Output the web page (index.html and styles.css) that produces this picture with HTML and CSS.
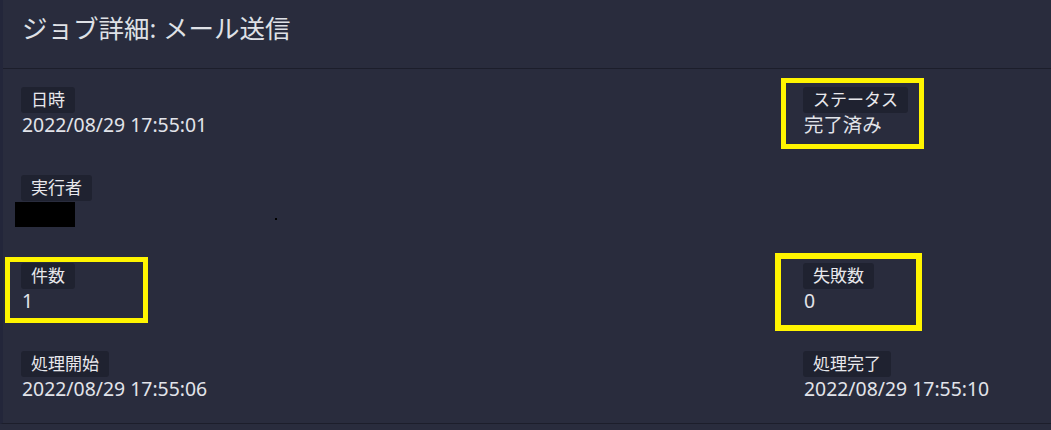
FILE: index.html
```html
<!DOCTYPE html>
<html lang="ja">
<head>
    <meta charset="UTF-8">
    <meta name="viewport" content="width=device-width, initial-scale=1.0">
    <title>ジョブ詳細</title>
    <link rel="stylesheet" href="styles.css">
</head>
<body>
    <div class="card">
        <div class="card-header">
            <h1>ジョブ詳細: メール送信</h1>
        </div>
        <div class="card-body">
            <div class="field">
                <span class="label">日時</span>
                <div class="value">2022/08/29 17:55:01</div>
            </div>
            <div class="field">
                <span class="label">ステータス</span>
                <div class="value">完了済み</div>
                <span class="mark mark-status"></span>
            </div>
            <div class="field">
                <span class="label">実行者</span>
                <div class="redact"></div>
                <span class="dot"></span>
            </div>
            <div class="field"></div>
            <div class="field">
                <span class="label">件数</span>
                <div class="value">1</div>
                <span class="mark mark-count"></span>
            </div>
            <div class="field">
                <span class="label">失敗数</span>
                <div class="value">0</div>
                <span class="mark mark-failed"></span>
            </div>
            <div class="field">
                <span class="label">処理開始</span>
                <div class="value">2022/08/29 17:55:06</div>
            </div>
            <div class="field">
                <span class="label">処理完了</span>
                <div class="value">2022/08/29 17:55:10</div>
            </div>
        </div>
    </div>
</body>
</html>
```

FILE: styles.css
```css
body {
    margin: 0;
    background-color: #292c3d;
    color: #e2e4ea;
    font-family: "Noto Sans", "Noto Sans CJK JP", sans-serif;
}
.card {
    border-left: 3px solid #23263a;
    border-bottom: 1px solid #1c1e2b;
}
.card-header {
    padding: 12px 19px 24px;
    border-bottom: 1px solid #1c1e2b;
}
.card-header h1 {
    margin: 0;
    font-size: 25.5px;
    font-weight: normal;
    line-height: 32px;
    color: #dfe1e6;
}
.card-body {
    display: grid;
    grid-template-columns: 782px 1fr;
    row-gap: 38px;
    padding: 18px 18px 22px;
}
.field {
    position: relative;
    height: 50px;
}
.label {
    display: inline-block;
    padding: 0 10px;
    font-size: 17px;
    line-height: 26px;
    background-color: #1f2230;
    border-radius: 3px;
    color: #e8e8ec;
}
.value {
    font-size: 19.4px;
    line-height: 24px;
    padding-left: 1px;
}
.redact {
    width: 60px;
    height: 25px;
    margin: 1px 0 0 -6px;
    background-color: #000;
}
.dot {
    position: absolute;
    left: 254px;
    top: 43px;
    width: 2px;
    height: 2px;
    background-color: #000;
}
.mark {
    position: absolute;
    border: 5px solid #fff500;
    box-sizing: border-box;
}
.mark-status {
    left: -22px;
    top: -9px;
    width: 143px;
    height: 71px;
}
.mark-count {
    left: -16px;
    top: -6px;
    width: 143px;
    height: 66px;
}
.mark-failed {
    left: -28px;
    top: -10px;
    width: 147px;
    height: 78px;
    border-width: 6px;
}
```
